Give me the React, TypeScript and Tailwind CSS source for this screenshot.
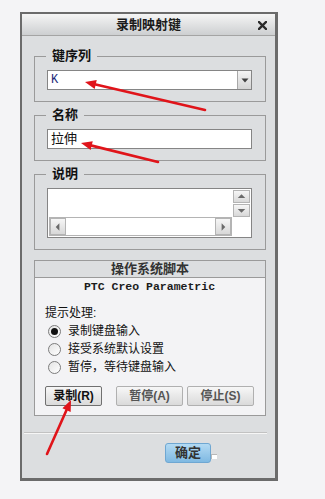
import React from 'react';

const cjk = { fontFamily: '"Liberation Sans", "Noto Sans CJK SC", sans-serif' };

const Legend = ({ children }: { children: React.ReactNode }) => (
  <legend className="px-[6px] text-[13px] leading-[16px] font-bold text-[#111]">{children}</legend>
);

const ScrollBtn = ({ dir }: { dir: 'up' | 'down' | 'left' | 'right' }) => {
  const pts = {
    up: '4,7 8,3 12,7',
    down: '4,4 8,8 12,4',
    left: '9,3 5,7 9,11',
    right: '6,3 10,7 6,11',
  }[dir];
  const vertical = dir === 'up' || dir === 'down';
  return (
    <div
      className={`flex items-center justify-center border border-[#b4b4b4] bg-gradient-to-b from-[#f6f6f6] to-[#d8d8d8] ${
        vertical ? 'w-[17px] h-[13px]' : 'w-[16px] h-[17px]'
      }`}
    >
      <svg width={vertical ? 16 : 15} height={vertical ? 11 : 14} viewBox={vertical ? '0 0 16 11' : '0 0 15 14'}>
        <polygon points={pts} fill="#6a6a6a" />
      </svg>
    </div>
  );
};

const Radio = ({ checked, label }: { checked?: boolean; label: string }) => (
  <div className="flex items-center h-[18px]">
    <div className="ml-[3px] w-[13px] h-[13px] rounded-full border border-[#7c7c7c] bg-gradient-to-br from-[#e4e4e4] to-white flex items-center justify-center">
      {checked && <div className="w-[7px] h-[7px] rounded-full bg-[#111]" />}
    </div>
    <span className="ml-[7px] text-[12px] leading-[18px] text-[#111]">{label}</span>
  </div>
);

const GrayButton = ({ label, enabled, w }: { label: string; enabled?: boolean; w: string }) => (
  <button
    className={`${w} h-[20px] rounded-[2px] border ${
      enabled ? 'border-[#707070] text-[#111]' : 'border-[#b0b0b0] text-[#555]'
    } bg-gradient-to-b from-[#f7f7f7] to-[#dadada] text-[12px] font-bold leading-[18px]`}
  >
    {label}
  </button>
);

const Arrow = ({ x1, y1, x2, y2 }: { x1: number; y1: number; x2: number; y2: number }) => {
  const a = Math.atan2(y2 - y1, x2 - x1);
  const len = 11;
  const hw = 4.5;
  const bx = x2 - Math.cos(a) * len;
  const by = y2 - Math.sin(a) * len;
  const p1 = `${bx + Math.sin(a) * hw},${by - Math.cos(a) * hw}`;
  const p2 = `${bx - Math.sin(a) * hw},${by + Math.cos(a) * hw}`;
  return (
    <g>
      <line x1={x1} y1={y1} x2={bx} y2={by} stroke="#e0141a" strokeWidth={2.6} strokeLinecap="round" />
      <polygon points={`${x2},${y2} ${p1} ${p2}`} fill="#e0141a" />
    </g>
  );
};

export default function App() {
  return (
    <div className="relative w-[325px] h-[499px] bg-[#f4f4f6] overflow-hidden pt-[12px] pl-[20px]" style={cjk}>
      <div className="w-[258px] h-[469px] flex flex-col border-l-2 border-t-2 border-r-[3px] border-b-[3px] border-[#6b6b6b] bg-[#dcdee0]">
        {/* title */}
        <div className="relative h-[22px] shrink-0 border-b border-[#a4a4a4] bg-gradient-to-b from-[#f5f5f5] to-[#cdcfd1] flex items-center justify-center">
          <span className="text-[13px] font-bold text-[#1a1a1a] leading-[22px]">录制映射键</span>
          <svg className="absolute right-[8px] top-[7px]" width="9" height="9" viewBox="0 0 9 9">
            <path d="M1 1 L8 8 M8 1 L1 8" stroke="#2a2a2a" strokeWidth="2.4" strokeLinecap="square" />
          </svg>
        </div>

        <div className="pl-[12px] pr-[9px] pt-[12px]">
          {/* 键序列 */}
          <fieldset className="border border-[#9a9a9a] pl-[11px] pr-[13px] pb-[11px]">
            <Legend>键序列</Legend>
            <div className="mt-[6px] ml-[1px] h-[20px] flex border border-[#858585] bg-white">
              <span className="flex-1 pl-[3px] text-[12px] leading-[18px] text-[#1c2a78]" style={{ fontFamily: '"Liberation Mono", monospace' }}>
                K
              </span>
              <div className="w-[14px] border-l border-[#a8a8a8] bg-gradient-to-b from-[#f4f4f4] to-[#d4d4d4] flex items-center justify-center">
                <svg width="8" height="5" viewBox="0 0 8 5">
                  <polygon points="0.5,0.5 7.5,0.5 4,4.5" fill="#404040" />
                </svg>
              </div>
            </div>
          </fieldset>

          {/* 名称 */}
          <fieldset className="mt-[5px] border border-[#9a9a9a] pl-[11px] pr-[13px] pb-[11px]">
            <Legend>名称</Legend>
            <div className="mt-[6px] ml-[1px] h-[20px] border border-[#858585] bg-white pl-[3px] text-[13px] leading-[18px] text-[#111]">
              拉伸
            </div>
          </fieldset>

          {/* 说明 */}
          <fieldset className="mt-[5px] border border-[#9a9a9a] pl-[11px] pr-[13px] pb-[11px]">
            <Legend>说明</Legend>
            <div className="mt-[6px] ml-[1px] h-[50px] border border-[#858585] bg-white p-[1px] flex">
              <div className="flex-1 flex flex-col justify-end">
                <div className="h-[19px] flex border border-[#b4b4b4] bg-white">
                  <ScrollBtn dir="left" />
                  <div className="flex-1 bg-white" />
                  <ScrollBtn dir="right" />
                </div>
              </div>
              <div className="w-[17px] ml-[1px] flex flex-col gap-[1px]">
                <ScrollBtn dir="up" />
                <ScrollBtn dir="down" />
              </div>
            </div>
          </fieldset>

          {/* 操作系统脚本 */}
          <div className="mt-[10px] border border-[#9a9a9a]">
            <div className="h-[17px] border-b border-[#9a9a9a] text-center text-[13px] font-bold leading-[16px] text-[#333]">
              操作系统脚本
            </div>
            <div className="bg-[#f3f3f5] pl-[10px] pr-[11px] pt-[1px] pb-[9px]">
              <div
                className="h-[16px] text-center text-[11.5px] font-bold leading-[16px] text-[#1c1c1c]"
                style={{ fontFamily: '"Liberation Mono", monospace' }}
              >
                PTC Creo Parametric
              </div>
              <div className="mt-[9px] h-[18px] text-[12px] leading-[18px] text-[#111]">提示处理:</div>
              <Radio checked label="录制键盘输入" />
              <Radio label="接受系统默认设置" />
              <Radio label="暂停，等待键盘输入" />
              <div className="mt-[10px] flex">
                <GrayButton enabled label="录制(R)" w="w-[57px]" />
                <GrayButton label="暂停(A)" w="ml-[14px] w-[67px]" />
                <GrayButton label="停止(S)" w="ml-[4px] w-[67px]" />
              </div>
            </div>
          </div>
        </div>

        {/* separator */}
        <div className="mt-[16px] ml-[2px] mr-[8px] h-[2px] shrink-0 border-t border-[#c2c2c2] border-b border-b-[#f6f6f6]" />

        {/* OK */}
        <div className="pl-[143px] pt-[9px] flex items-end">
          <button className="w-[46px] h-[20px] rounded-[3px] border border-[#6fa7d2] bg-gradient-to-b from-[#b3daf3] to-[#7fb9e2] text-[13px] font-bold leading-[18px] text-[#333]">
            确定
          </button>
          <div className="mb-[4px] w-[6px] h-[5px] border-t border-l border-[#b8b8b8] bg-white" />
        </div>
      </div>

      <svg className="absolute left-0 top-0 pointer-events-none" width="325" height="499" viewBox="0 0 325 499">
        <Arrow x1={205} y1={110} x2={85} y2={82} />
        <Arrow x1={158} y1={162} x2={81} y2={143} />
        <Arrow x1={47} y1={454} x2={71} y2={400} />
      </svg>
    </div>
  );
}
